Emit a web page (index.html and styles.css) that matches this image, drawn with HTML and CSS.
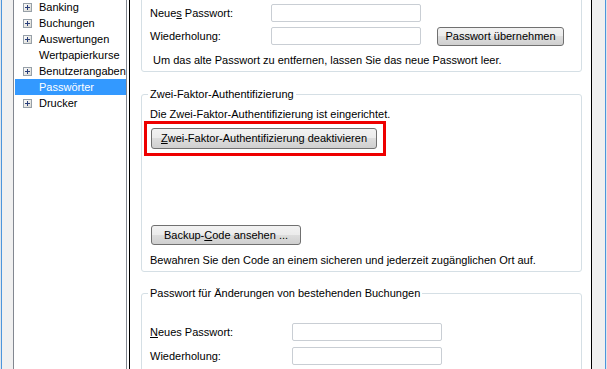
FILE: index.html
```html
<!DOCTYPE html>
<html lang="de">
<head>
  <meta charset="UTF-8" />
  <title>Einstellungen | Passwörter</title>
  <link rel="stylesheet" href="styles.css">
</head>
<body>

  <div class="window">

    <!-- Navigation tree -->
    <div class="tree">
      <svg class="defs" width="0" height="0">
        <defs>
          <linearGradient id="boxFill" x1="0" y1="0" x2="1" y2="1">
            <stop offset="0" stop-color="#ffffff" />
            <stop offset="1" stop-color="#d6d6d0" />
          </linearGradient>
        </defs>
      </svg>
      <ul>
        <li><svg class="expander" width="9" height="9"><rect x="0.5" y="0.5" width="8" height="8" fill="url(#boxFill)" stroke="#97a0a8" /><path d="M2 4.5h5M4.5 2v5" stroke="#2a3f7a" /></svg>Banking</li>
        <li><svg class="expander" width="9" height="9"><rect x="0.5" y="0.5" width="8" height="8" fill="url(#boxFill)" stroke="#97a0a8" /><path d="M2 4.5h5M4.5 2v5" stroke="#2a3f7a" /></svg>Buchungen</li>
        <li><svg class="expander" width="9" height="9"><rect x="0.5" y="0.5" width="8" height="8" fill="url(#boxFill)" stroke="#97a0a8" /><path d="M2 4.5h5M4.5 2v5" stroke="#2a3f7a" /></svg>Auswertungen</li>
        <li class="leaf">Wertpapierkurse</li>
        <li><svg class="expander" width="9" height="9"><rect x="0.5" y="0.5" width="8" height="8" fill="url(#boxFill)" stroke="#97a0a8" /><path d="M2 4.5h5M4.5 2v5" stroke="#2a3f7a" /></svg>Benutzerangaben</li>
        <li class="leaf selected">Passwörter</li>
        <li><svg class="expander" width="9" height="9"><rect x="0.5" y="0.5" width="8" height="8" fill="url(#boxFill)" stroke="#97a0a8" /><path d="M2 4.5h5M4.5 2v5" stroke="#2a3f7a" /></svg>Drucker</li>
      </ul>
    </div>

    <div class="splitter"></div>

    <!-- Settings page -->
    <div class="page">

      <fieldset class="group group-cut">
        <div class="form-grid">
          <label for="pw1">Neue<u>s</u> Passwort:</label>
          <input type="password" id="pw1" />
          <span></span>
          <label for="pw1r">Wiederholung:</label>
          <input type="password" id="pw1r" />
          <button type="button" class="btn btn-apply">Passwort übernehmen</button>
        </div>
        <p class="hint">Um das alte Passwort zu entfernen, lassen Sie das neue Passwort leer.</p>
      </fieldset>

      <fieldset class="group group-2fa">
        <legend>Zwei-Faktor-Authentifizierung</legend>
        <p>Die Zwei-Faktor-Authentifizierung ist eingerichtet.</p>
        <div class="highlight">
          <button type="button" class="btn btn-wide"><u>Z</u>wei-Faktor-Authentifizierung deaktivieren</button>
        </div>
        <button type="button" class="btn btn-backup">Backup-<u>C</u>ode ansehen ...</button>
        <p class="note">Bewahren Sie den Code an einem sicheren und jederzeit zugänglichen Ort auf.</p>
      </fieldset>

      <fieldset class="group group-bookings">
        <legend>Passwort für Änderungen von bestehenden Buchungen</legend>
        <div class="form-grid wide-labels">
          <label for="pw2"><u>N</u>eues Passwort:</label>
          <input type="password" id="pw2" />
          <label for="pw2r">Wiederholung:</label>
          <input type="password" id="pw2r" />
        </div>
      </fieldset>

    </div>
  </div>

</body>
</html>
```

FILE: styles.css
```css
:root {
  --frame-bg: #f0f0f0;
  --frame-blue: #4d96dc;
  --tree-border: #828790;
  --group-border: #d5dfe5;
  --input-border: #c9ced4;
  --select-bg: #3399ff;
}

* {
  box-sizing: border-box;
}

body {
  margin: 0;
  height: 369px;
  overflow: hidden;
  background: var(--frame-bg);
  font-family: "Liberation Sans", Arial, sans-serif;
  font-size: 11px;
  line-height: 13px;
  color: #000;
}

.window {
  display: flex;
  height: 369px;
  border-left: 1px solid #dfe5ec;
  border-right: 1px solid #dfe5ec;
}

.window::before,
.window::after {
  content: "";
  width: 1px;
  background: var(--frame-blue);
}

.window::before {
  margin-right: 11px;
}

.window::after {
  margin-left: 13px;
}

/* Tree */
.tree {
  width: 114px;
  background: #fff;
  border-left: 1px solid var(--tree-border);
  border-right: 1px solid var(--tree-border);
  padding-left: 1px;
}

.defs {
  position: absolute;
}

.tree ul {
  list-style: none;
  margin: -1px 0 0;
  padding: 0;
}

.tree li {
  display: flex;
  align-items: center;
  height: 16px;
  padding-left: 8px;
  white-space: nowrap;
}

.tree li.leaf {
  padding-left: 24px;
}

.tree li.selected {
  background: var(--select-bg);
  color: #fff;
}

.expander {
  flex: none;
  margin-right: 7px;
}

.splitter {
  width: 2px;
  background: #fff;
}

/* Page */
.page {
  width: 463px;
  background: #fff;
  border-left: 1px solid #000;
  border-right: 1px solid #000;
  padding: 0 9px 0 11px;
}

.group {
  margin: 0;
  padding: 0 8px 4px 8px;
  border: 1px solid var(--group-border);
  border-radius: 3px;
  min-width: 0;
}

.group legend {
  padding: 0 2px;
  margin-left: -2px;
}

.group p {
  margin: 0;
}

.group-cut {
  margin-top: -10px;
  padding-top: 13px;
  border-top-left-radius: 0;
  border-top-right-radius: 0;
}

.form-grid {
  display: grid;
  grid-template-columns: 121px 150px auto;
  grid-auto-rows: 18px;
  row-gap: 5px;
  align-items: center;
}

.form-grid.wide-labels {
  grid-template-columns: 142px 150px;
  row-gap: 6px;
  margin-top: 23px;
}

.form-grid input {
  height: 18px;
  width: 150px;
  border: 1px solid var(--input-border);
  border-radius: 2px;
  padding: 0 3px;
  font: inherit;
}

.hint {
  margin-top: 9px !important;
  padding-left: 3px;
}

.btn {
  display: block;
  font: inherit;
  color: #000;
  border: 1px solid #707070;
  border-radius: 3px;
  background: linear-gradient(#f2f2f2 0%, #ebebeb 50%, #dddddd 50%, #cfcfcf 100%);
  padding: 0;
  cursor: pointer;
}

.btn-apply {
  width: 127px;
  height: 19px;
  margin-left: 16px;
  align-self: start;
}

.group-2fa {
  margin-top: 16px;
  padding-top: 7px;
}

.highlight {
  display: inline-block;
  margin: 0 0 0 -6px;
  border: 3px solid #ee0000;
  padding: 4px 6px 4px 4px;
}

.btn-wide {
  width: 226px;
  height: 21px;
}

.btn-backup {
  width: 150px;
  height: 20px;
  margin: 69px 0 0 1px;
}

.note {
  margin-top: 9px !important;
}

.group-bookings {
  margin-top: 15px;
  padding-bottom: 20px;
}
```
